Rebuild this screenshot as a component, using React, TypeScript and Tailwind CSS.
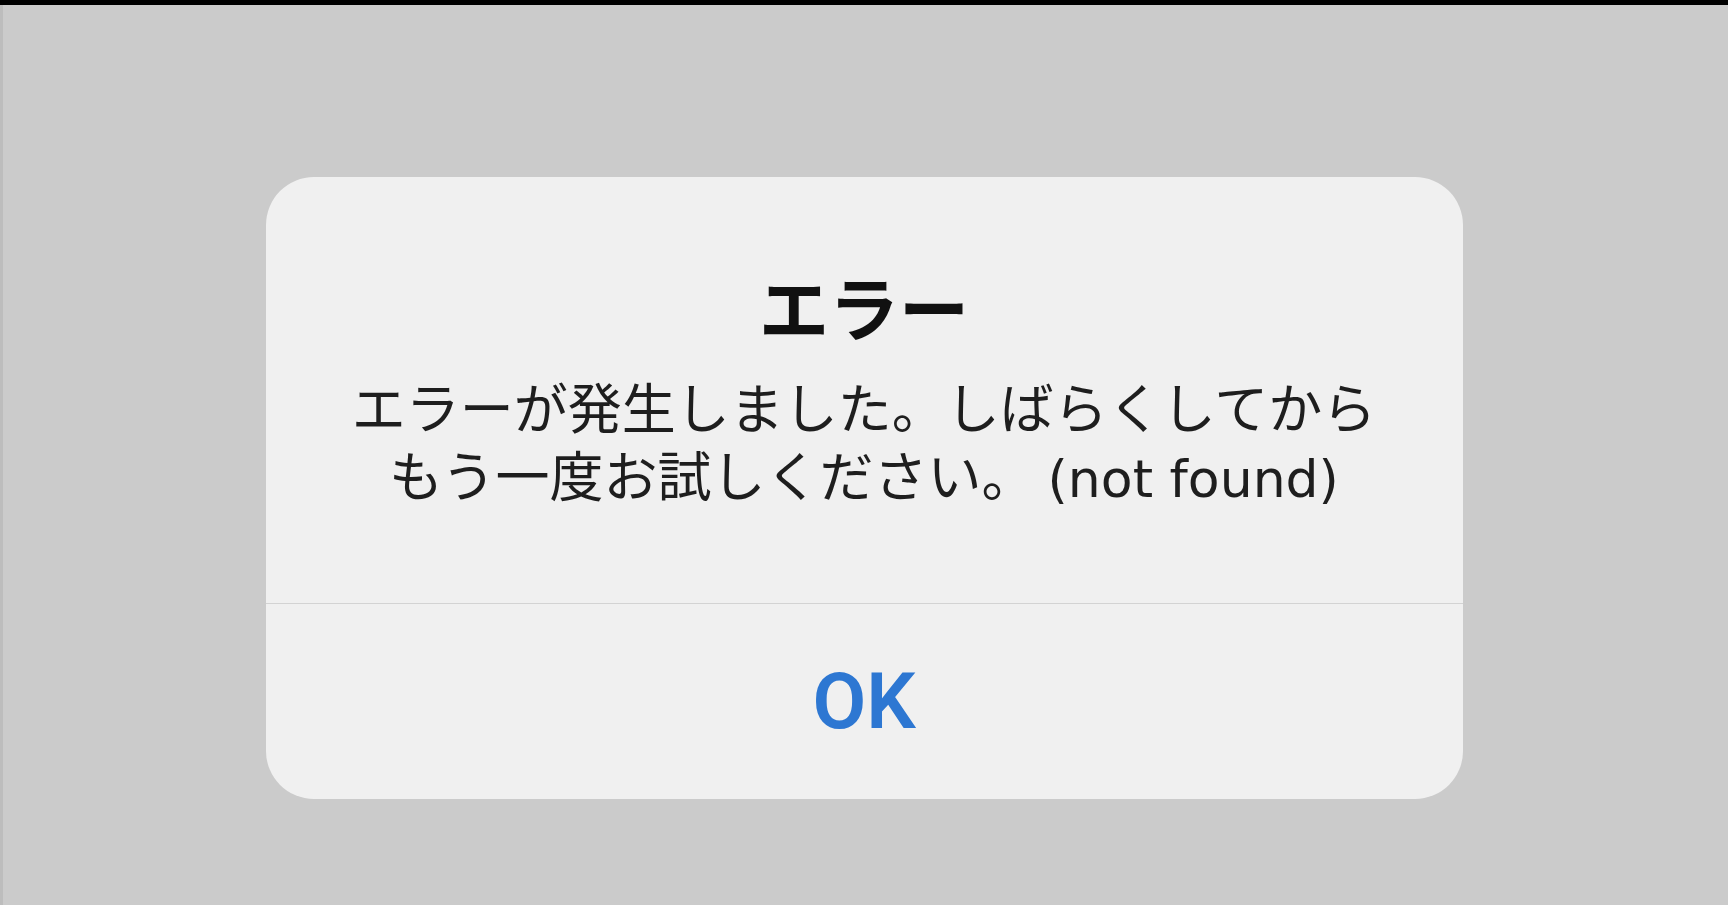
import React from "react";

// iOS-style alert over a grey backdrop
export default function App() {
  return (
    <div className="h-[905px] w-full flex flex-col bg-black overflow-hidden">
      <div className="h-[5px] shrink-0 bg-black" />
      <div className="flex-1 flex justify-center bg-[#cbcbcb] border-l-[3px] border-l-[#bdbdbd] pt-[172px] pr-[3px]">
        <div className="w-[1197px] h-[622px] bg-[#f0f0f0] rounded-[48px] flex flex-col font-['Noto_Sans_CJK_JP','Noto_Sans',sans-serif]">
          <div className="flex flex-col items-center pt-[89px] pb-[95px]">
            <h1 className="text-[70px] leading-[80px] font-bold text-[#111111]">エラー</h1>
            <div className="mt-[26px] flex flex-col items-center text-[54px] leading-[68px] text-[#1e1e1e] whitespace-nowrap">
              <p className="h-[68px]">エラーが発生しました。しばらくしてから</p>
              <p className="h-[68px]">
                もう一度お試しください。{" "}
                <span className="font-['DejaVu_Sans',sans-serif] text-[52px] leading-[50px]">(not found)</span>
              </p>
            </div>
          </div>
          <div className="h-px bg-[#d3d3d3]" />
          <button className="flex-1 flex items-center justify-center rounded-b-[48px]">
            <span className="font-['Roboto',sans-serif] font-semibold text-[78px] leading-none text-[#2d77d2]">
              OK
            </span>
          </button>
        </div>
      </div>
    </div>
  );
}
